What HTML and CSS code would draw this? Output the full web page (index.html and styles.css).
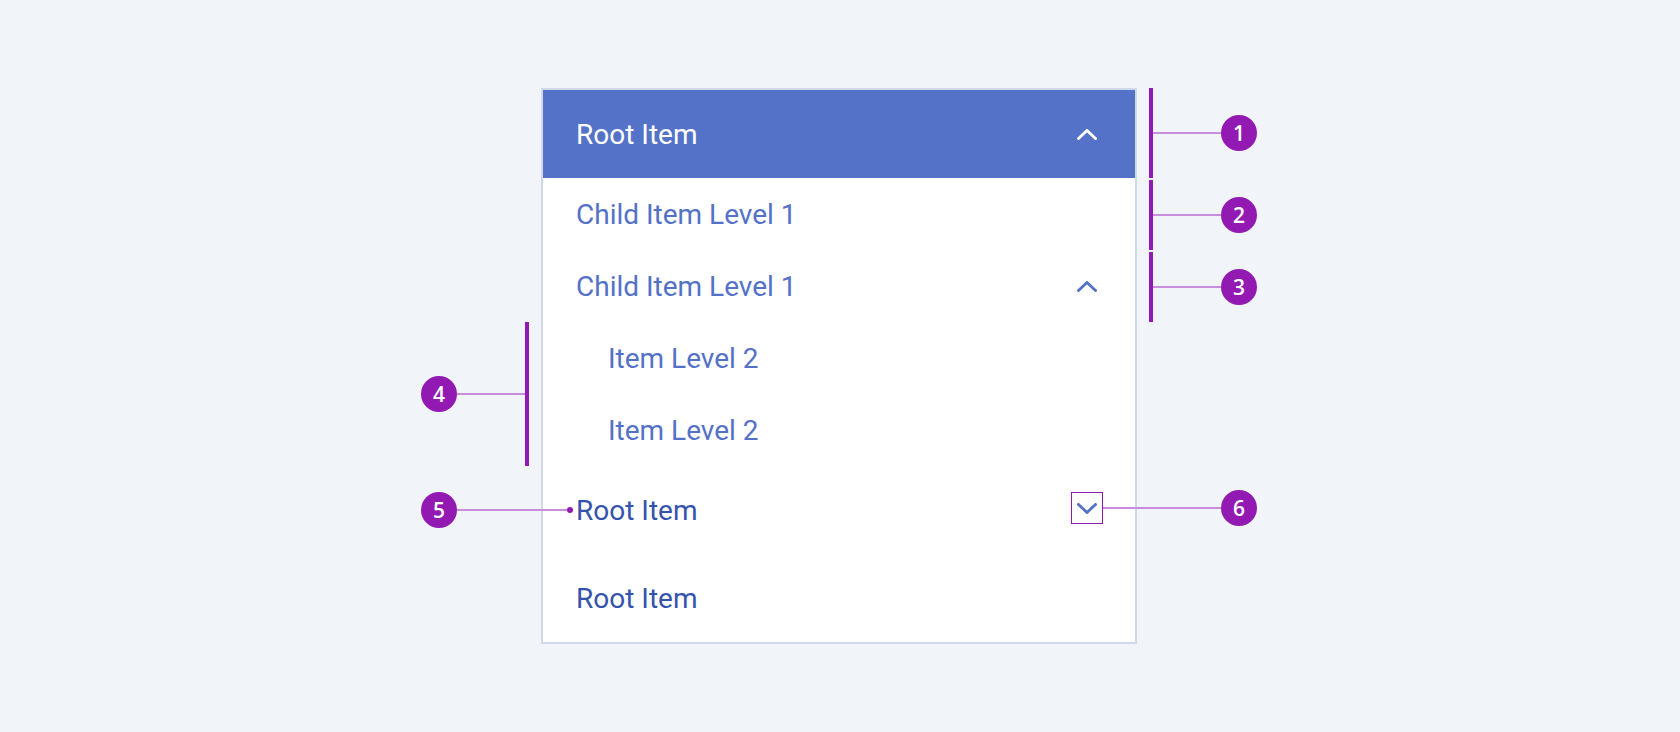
FILE: index.html
```html
<!DOCTYPE html>
<html lang="en">
<head>
  <meta charset="UTF-8">
  <title>Side Navigation Anatomy</title>
  <link rel="stylesheet" href="styles.css">
</head>
<body>
  <div class="stage">
    <nav class="sidenav">
      <div class="nav-row root active">
        <span class="label">Root Item</span>
        <span class="toggle">
          <svg width="20" height="11" viewBox="0 0 20 11"><path d="M1.5 9.5 L10 1.5 L18.5 9.5" /></svg>
        </span>
      </div>
      <div class="nav-row child">
        <span class="label">Child Item Level 1</span>
      </div>
      <div class="nav-row child">
        <span class="label">Child Item Level 1</span>
        <span class="toggle">
          <svg width="20" height="11" viewBox="0 0 20 11"><path d="M1.5 9.5 L10 1.5 L18.5 9.5" /></svg>
        </span>
      </div>
      <div class="nav-row grandchild">
        <span class="label">Item Level 2</span>
      </div>
      <div class="nav-row grandchild">
        <span class="label">Item Level 2</span>
      </div>
      <div class="nav-row root">
        <span class="label">Root Item</span>
        <span class="toggle marked">
          <svg width="20" height="11" viewBox="0 0 20 11"><path d="M1.5 1.5 L10 9.5 L18.5 1.5" /></svg>
        </span>
      </div>
      <div class="nav-row root">
        <span class="label">Root Item</span>
      </div>
    </nav>

    <!-- callouts -->
    <div class="callout right c1"><span class="bar"></span><span class="wire"></span><span class="badge">1</span></div>
    <div class="callout right c2"><span class="bar"></span><span class="wire"></span><span class="badge">2</span></div>
    <div class="callout right c3"><span class="bar"></span><span class="wire"></span><span class="badge">3</span></div>
    <div class="callout left c4"><span class="badge">4</span><span class="wire"></span><span class="bar"></span></div>
    <div class="callout left c5"><span class="badge">5</span><span class="wire"></span><span class="dot"></span></div>
    <div class="callout right c6"><span class="wire"></span><span class="badge">6</span></div>
  </div>
</body>
</html>
```

FILE: styles.css
```css
body {
  margin: 0;
  background-color: #f1f4f9;
  font-family: Roboto, "Liberation Sans", sans-serif;
  display: flex;
  justify-content: center;
  padding: 88px 2px 0 0;
  height: 644px;
}

.stage {
  position: relative;
  width: 596px;
}

.sidenav {
  border: 2px solid #d0d9ea;
  background-color: #fff;
  display: flex;
  flex-direction: column;
}

.nav-row {
  display: flex;
  align-items: center;
  justify-content: space-between;
  padding: 0 32px 0 33px;
  font-size: 28px;
}

.nav-row.root {
  height: 88px;
  color: #3453ad;
}

.nav-row.root.active {
  background-color: #5473c8;
  color: #fff;
}

.nav-row.child {
  height: 72px;
  color: #5471c8;
}

.nav-row.grandchild {
  height: 72px;
  padding-left: 65px;
  color: #5471c8;
}

.toggle {
  width: 32px;
  height: 32px;
  box-sizing: border-box;
  display: flex;
  align-items: center;
  justify-content: center;
  color: #5471c8;
}

.active .toggle {
  color: #fff;
}

.toggle.marked {
  border: 1px solid #9219b1;
  margin-top: -4px;
}

.toggle svg path {
  fill: none;
  stroke: currentColor;
  stroke-width: 2.8;
  stroke-linecap: square;
}

/* annotation markers */
.callout {
  position: absolute;
  display: flex;
  align-items: center;
}

.callout .bar {
  width: 4px;
  background-color: #9219b1;
}

.callout .wire {
  height: 2px;
  background-color: #c98ddd;
}

.callout .badge {
  width: 36px;
  height: 36px;
  border-radius: 50%;
  background-color: #9219b1;
  color: #fff;
  font-family: "Open Sans", "Noto Sans", sans-serif;
  font-size: 21px;
  font-weight: 600;
  display: flex;
  align-items: center;
  justify-content: center;
}

.callout .dot {
  width: 6px;
  height: 6px;
  border-radius: 50%;
  background-color: #9219b1;
}

.callout.right { left: 608px; }
.callout.right .wire { width: 68px; }

.c1 { top: 0; }
.c1 .bar { height: 90px; }
.c2 { top: 92px; }
.c2 .bar { height: 70px; }
.c3 { top: 164px; }
.c3 .bar { height: 70px; }

.callout.left { left: -120px; }

.c4 { top: 234px; }
.c4 .wire { width: 68px; }
.c4 .bar { height: 144px; }

.c5 { top: 404px; }
.c5 .wire { width: 110px; }

.callout.c6 { left: 562px; top: 402px; }
.callout.c6 .wire { width: 118px; }
```
